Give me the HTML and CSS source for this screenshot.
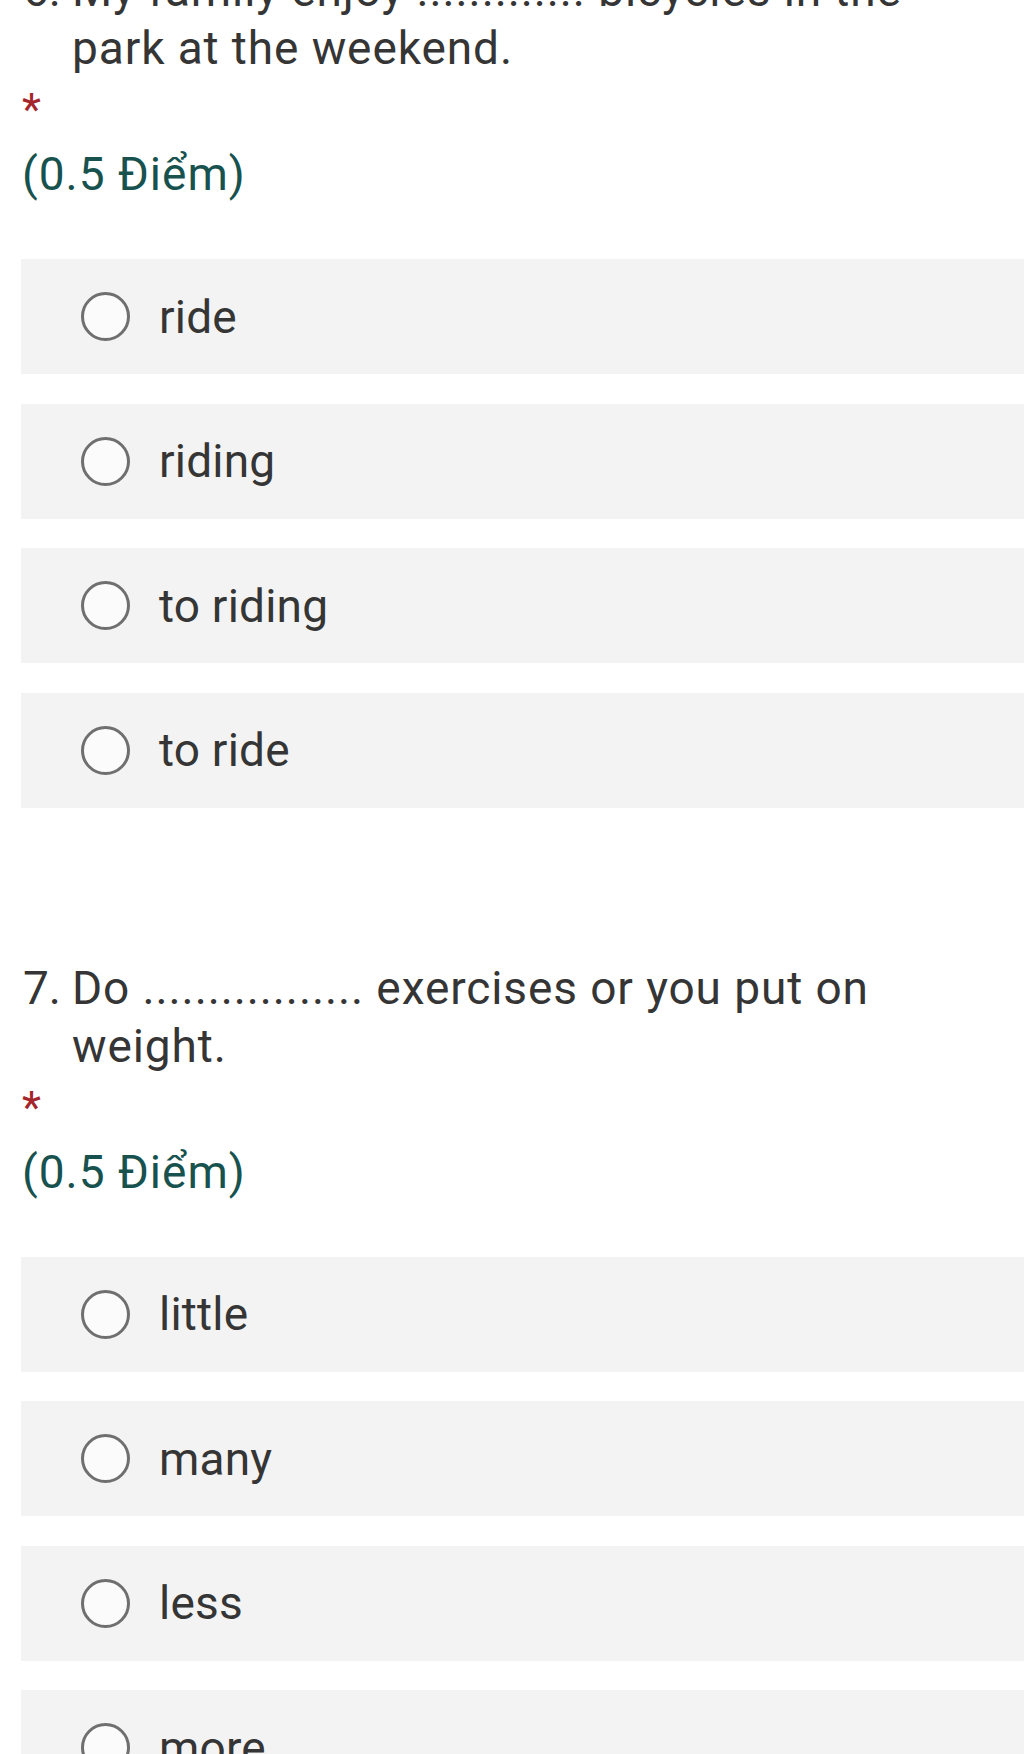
FILE: index.html
```html
<!DOCTYPE html>
<html lang="vi">
<head>
<meta charset="utf-8">
<title>Form</title>
<link rel="stylesheet" href="styles.css">
</head>
<body>
<main class="page">
  <section class="question q-first">
    <div class="title">
      <span class="num">6.</span>
      <span class="text">My family enjoy ............. bicycles in the<br>park at the weekend.</span>
    </div>
    <div class="required">*</div>
    <div class="points">(0.5 Điểm)</div>
    <div class="options">
      <label class="option"><span class="radio"></span><span class="label">ride</span></label>
      <label class="option"><span class="radio"></span><span class="label">riding</span></label>
      <label class="option"><span class="radio"></span><span class="label">to riding</span></label>
      <label class="option"><span class="radio"></span><span class="label">to ride</span></label>
    </div>
  </section>
  <section class="question">
    <div class="title">
      <span class="num">7.</span>
      <span class="text">Do ................. exercises or you put on weight.</span>
    </div>
    <div class="required">*</div>
    <div class="points">(0.5 Điểm)</div>
    <div class="options">
      <label class="option"><span class="radio"></span><span class="label">little</span></label>
      <label class="option"><span class="radio"></span><span class="label">many</span></label>
      <label class="option"><span class="radio"></span><span class="label">less</span></label>
      <label class="option"><span class="radio"></span><span class="label">more</span></label>
    </div>
  </section>
</main>
</body>
</html>
```

FILE: styles.css
```css
html, body {
  margin: 0;
  padding: 0;
  background: #ffffff;
  overflow: hidden;
}

body {
  width: 1024px;
  height: 1754px;
  font-family: Roboto, "Noto Sans", "Liberation Sans", sans-serif;
  color: #353535;
}

.page {
  display: flex;
  flex-direction: column;
  padding-left: 21px;
}

.question {
  display: flex;
  flex-direction: column;
  margin-top: 151px;
}

.question.q-first {
  margin-top: -39px;
}

.title {
  display: flex;
  font-size: 46px;
  line-height: 58px;
  letter-spacing: 0.9px;
  padding-left: 2px;
}

.num {
  flex: 0 0 49px;
  letter-spacing: 0;
}

.text {
  flex: 0 1 auto;
  max-width: 830px;
}

.required {
  color: #a4262c;
  font-size: 44px;
  line-height: 58px;
  height: 58px;
  padding-top: 4px;
  padding-left: 1px;
}

.points {
  color: #17524e;
  font-size: 46px;
  line-height: 58px;
  letter-spacing: 1px;
  margin-top: 6px;
  padding-left: 1px;
}

.options {
  display: flex;
  flex-direction: column;
  gap: 29.5px;
  margin-top: 56px;
}

.option {
  display: flex;
  align-items: center;
  height: 115px;
  background: #f3f3f3;
  padding-left: 60px;
  font-size: 46px;
  line-height: 58px;
  letter-spacing: 0.2px;
  color: #353535;
}

.radio {
  flex: 0 0 auto;
  box-sizing: border-box;
  width: 49px;
  height: 49px;
  border: 3px solid #6f6f6f;
  border-radius: 50%;
  background: #fbfbfb;
  margin-right: 29px;
}
```
